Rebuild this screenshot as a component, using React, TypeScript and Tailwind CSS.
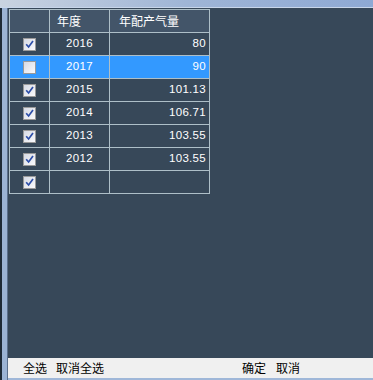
import React from 'react';

const rows = [
  { checked: true, year: '2016', value: '80' },
  { checked: false, year: '2017', value: '90', selected: true },
  { checked: true, year: '2015', value: '101.13' },
  { checked: true, year: '2014', value: '106.71' },
  { checked: true, year: '2013', value: '103.55' },
  { checked: true, year: '2012', value: '103.55' },
  { checked: true, year: '', value: '' },
];

function CheckBox({ checked }: { checked: boolean }) {
  return (
    <div className="flex h-[13px] w-[13px] items-center justify-center border border-[#9a9a9a] bg-gradient-to-br from-[#d6dae4] to-[#fafafc]">
      {checked && (
        <svg width="9" height="9" viewBox="0 0 9 9">
          <path d="M1.2 4.2 L3.6 7 L8 1" fill="none" stroke="#2d4ea8" strokeWidth="1.7" />
        </svg>
      )}
    </div>
  );
}

export default function App() {
  const num = { fontFamily: '"Liberation Sans", sans-serif', fontSize: '11.5px', letterSpacing: '0.3px' };
  return (
    <div
      className="flex h-[380px] w-[373px] flex-col overflow-hidden bg-[#3a4a5c] text-[12px]"
      style={{ fontFamily: '"Noto Sans CJK SC", sans-serif' }}
    >
      <div className="h-[7px] bg-gradient-to-r from-[#c9d3e0] via-[#9fb5d6] to-[#8ea9d4]" />
      <div className="h-[1px] bg-[#c8d6ea]" />
      <div className="flex flex-1">
        <div className="flex w-[8px]">
          <div className="w-[2px] bg-[#1e2a36]" />
          <div className="w-[5px] bg-[#9bb3d4]" />
          <div className="w-[1px] bg-[#5a6f8c]" />
        </div>
        <div className="flex flex-1 flex-col">
          <div className="flex-1 bg-[#374859] pl-[1px] pt-[1px]">
            <table className="border-collapse text-white">
              <thead>
                <tr className="h-[23px] bg-[#435569]">
                  <th className="w-[40px] border border-[#aebfc8]" />
                  <th className="w-[60px] border border-[#aebfc8] pl-[7px] text-left font-normal">年度</th>
                  <th className="w-[100px] border border-[#aebfc8] pl-[9px] text-left font-normal">年配产气量</th>
                </tr>
              </thead>
              <tbody>
                {rows.map((r, i) => (
                  <tr key={i} className={`h-[23px] ${r.selected ? 'bg-[#3399ff]' : ''}`}>
                    <td className="border border-[#aebfc8]">
                      <div className="flex justify-center">
                        <CheckBox checked={r.checked} />
                      </div>
                    </td>
                    <td className="border border-[#aebfc8] text-center" style={num}>{r.year}</td>
                    <td className="border border-[#aebfc8] pr-[3px] text-right" style={num}>{r.value}</td>
                  </tr>
                ))}
              </tbody>
            </table>
          </div>
          <div className="flex h-[20px] items-center bg-[#f0f0f0] text-black">
            <span className="ml-[15px]">全选</span>
            <span className="ml-[9px]">取消全选</span>
            <span className="ml-[138px]">确定</span>
            <span className="ml-[10px]">取消</span>
          </div>
          <div className="h-[2px] bg-[#9fb7d8]" />
        </div>
      </div>
    </div>
  );
}
